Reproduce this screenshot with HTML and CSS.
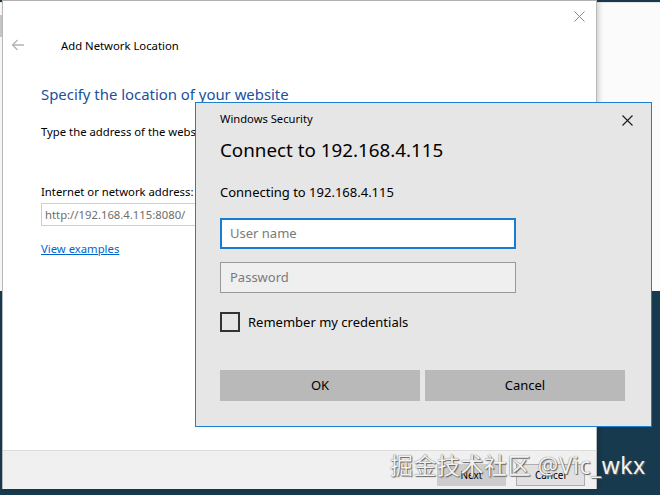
FILE: index.html
```html
<!DOCTYPE html>
<html>
<head>
<meta charset="utf-8">
<link rel="stylesheet" href="styles.css">
</head>
<body>
<div class="desktop">
  <div class="backwin"><span class="backwin-mark"></span></div>

  <div class="wizard">
    <div class="wz-top">
      <span class="wz-clip">Add Network Location</span>
      <svg class="wz-close" width="11" height="11" viewBox="0 0 11 11"><path d="M0.5 0.5L10.5 10.5M10.5 0.5L0.5 10.5" stroke="#8a8a8a" stroke-width="1" fill="none"/></svg>
    </div>
    <div class="wz-nav">
      <svg class="wz-back" width="14" height="12" viewBox="0 0 14 12"><path d="M13 6H1.5M6.5 1L1.5 6L6.5 11" stroke="#b4b4b4" stroke-width="1.3" fill="none"/></svg>
      <span class="wz-title">Add Network Location</span>
    </div>
    <div class="wz-body">
      <h1 class="wz-heading">Specify the location of your website</h1>
      <p class="wz-text">Type the address of the website, network location, or FTP site that this shortcut will open.</p>
      <div class="wz-label">Internet or network address:</div>
      <div class="wz-input">http://192.168.4.115:8080/</div>
      <a class="wz-link">View examples</a>
    </div>
    <div class="wz-foot">
      <span class="wz-btn wz-next">Next</span>
      <span class="wz-btn wz-cancel">Cancel</span>
    </div>
  </div>

  <div class="security">
    <div class="sec-titlebar">
      <span class="sec-title">Windows Security</span>
      <svg class="sec-close" width="11" height="11" viewBox="0 0 11 11"><path d="M0.5 0.5L10.5 10.5M10.5 0.5L0.5 10.5" stroke="#1a1a1a" stroke-width="1.1" fill="none"/></svg>
    </div>
    <div class="sec-heading">Connect to 192.168.4.115</div>
    <div class="sec-sub">Connecting to 192.168.4.115</div>
    <div class="sec-field sec-focus">User name</div>
    <div class="sec-field sec-pass">Password</div>
    <div class="sec-check"><span class="sec-box"></span><span>Remember my credentials</span></div>
    <div class="sec-buttons">
      <span class="sec-btn">OK</span>
      <span class="sec-btn">Cancel</span>
    </div>
  </div>

  <div class="watermark">掘金技术社区 @Vic_wkx</div>
</div>
</body>
</html>
```

FILE: styles.css
```css
* { box-sizing: border-box; }
html, body { margin: 0; padding: 0; }
body {
  width: 660px;
  height: 495px;
  overflow: hidden;
  font-family: "Noto Sans", "Open Sans", sans-serif;
  color: #000;
}
.desktop {
  position: relative;
  width: 660px;
  height: 495px;
  background: #183a4e;
  overflow: hidden;
}
.backwin {
  position: absolute;
  left: 0;
  top: 2px;
  width: 660px;
  height: 289px;
  background: #fbfbfb;
  border-top: 1px solid #e4e4e4;
}
.backwin-mark {
  position: absolute;
  left: 0;
  top: 12px;
  width: 3px;
  height: 22px;
  background: #c9c9c9;
}

/* wizard window */
.wizard {
  position: absolute;
  left: 2px;
  top: 0;
  width: 595px;
  height: 489px;
  background: #fff;
  border-left: 1px solid #b9b9b9;
  border-right: 1px solid #b9b9b9;
  border-top: 1px solid #b0b0b0;
  box-shadow: 2px 0 5px rgba(0,0,0,0.18);
  display: flex;
  flex-direction: column;
}
.wz-top {
  height: 30px;
  position: relative;
  display: flex;
  justify-content: flex-end;
  align-items: flex-start;
}
.wz-clip {
  position: absolute;
  left: 113px;
  top: -13px;
  font-size: 11.3px;
  color: #666;
}
.wz-close {
  margin: 10px 11px 0 0;
}
.wz-nav {
  display: flex;
  align-items: center;
  height: 30px;
  margin-top: -1px;
}
.wz-back {
  margin-left: 8px;
}
.wz-title {
  margin-left: 36px;
  font-size: 11.3px;
  color: #000;
}
.wz-body {
  flex: 1;
  padding-left: 38px;
}
.wz-heading {
  margin: 23px 0 0 0;
  font-size: 14.9px;
  font-weight: normal;
  color: #1b4f9f;
  line-height: 22px;
}
.wz-text {
  margin: 19px 0 0 0;
  font-size: 11.3px;
  line-height: 16px;
  white-space: nowrap;
}
.wz-label {
  margin-top: 44px;
  font-size: 11.3px;
  line-height: 16px;
}
.wz-input {
  margin-top: 3px;
  width: 520px;
  height: 23px;
  border: 1px solid #cfcfcf;
  font-size: 11.3px;
  line-height: 21px;
  padding-left: 3px;
  color: #6d6d6d;
}
.wz-link {
  display: inline-block;
  margin-top: 15px;
  font-size: 11.3px;
  line-height: 16px;
  color: #0066cc;
  text-decoration: underline;
}
.wz-foot {
  height: 39px;
  background: #f0f0f0;
  border-top: 1px solid #dcdcdc;
  display: flex;
  justify-content: flex-end;
  align-items: flex-start;
  gap: 10px;
  padding: 13px 11px 0 0;
}
.wz-btn {
  width: 69px;
  height: 22px;
  font-size: 10px;
  line-height: 20px;
  text-align: center;
  border: 1px solid #adadad;
  background: #e1e1e1;
}
.wz-next {
  background: #cccccc;
  border-color: #cccccc;
}

/* security dialog */
.security {
  position: absolute;
  left: 195px;
  top: 102px;
  width: 457px;
  height: 325px;
  background: #e6e6e6;
  border: 1px solid #1c7fd0;
  padding: 0 26px 0 24px;
  display: flex;
  flex-direction: column;
}
.sec-titlebar {
  height: 32px;
  display: flex;
  align-items: center;
  justify-content: space-between;
}
.sec-title {
  font-size: 11.2px;
  line-height: 16px;
  margin-top: 0;
}
.sec-close {
  margin-right: -8px;
  margin-top: 2px;
}
.sec-heading {
  font-size: 18.8px;
  line-height: 26px;
  margin-top: 2px;
}
.sec-sub {
  font-size: 13px;
  line-height: 18px;
  margin-top: 20px;
}
.sec-field {
  margin-top: 13px;
  width: 296px;
  height: 31px;
  font-size: 13px;
  line-height: 27px;
  padding-left: 8px;
  color: #7a7a7a;
  border: 2px solid #999999;
  background: #efefef;
}
.sec-focus {
  margin-top: 17px;
  border-color: #1a7ccf;
  background: #ffffff;
}
.sec-pass {
  border-width: 1px;
  line-height: 29px;
  padding-left: 9px;
}
.sec-check {
  margin-top: 19px;
  display: flex;
  align-items: center;
  gap: 8px;
  font-size: 13px;
}
.sec-box {
  width: 20px;
  height: 20px;
  border: 2px solid #333;
  flex: none;
}
.sec-buttons {
  margin-top: 38px;
  display: flex;
  gap: 5px;
}
.sec-btn {
  width: 200px;
  height: 31px;
  background: #b9b9b9;
  font-size: 13px;
  line-height: 31px;
  text-align: center;
}

/* watermark */
.watermark {
  position: absolute;
  left: 390px;
  top: 450px;
  font-size: 23px;
  line-height: 30px;
  color: #f2f2f2;
  font-family: "Noto Sans", "Noto Sans CJK SC", sans-serif;
  text-shadow: 0 0 1px #555, 1px 1px 1px #666;
  letter-spacing: 0.5px;
  white-space: nowrap;
}
```
